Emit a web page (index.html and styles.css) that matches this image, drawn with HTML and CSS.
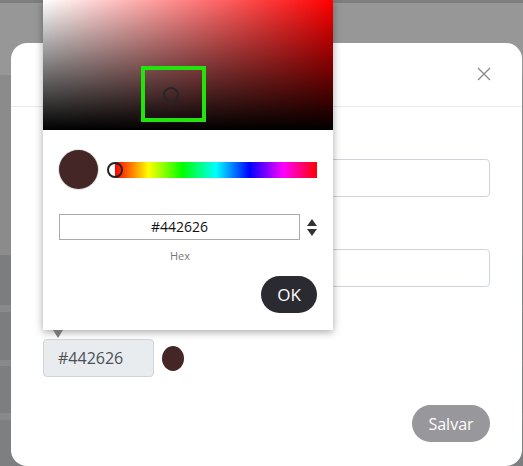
FILE: index.html
```html
<!DOCTYPE html>
<html lang="pt">
<head>
<meta charset="utf-8">
<title>Cor</title>
<link rel="stylesheet" href="styles.css">
</head>
<body>
<div class="page">
  <div class="modal">
    <div class="modal-header">
      <svg class="close" width="14" height="14" viewBox="0 0 14 14"><path d="M1 1L13 13M13 1L1 13" stroke="#8a8a8a" stroke-width="1.4" fill="none"/></svg>
    </div>
    <div class="modal-body">
      <div class="group">
        <label class="label">Nome</label>
        <div class="input"></div>
      </div>
      <div class="group">
        <label class="label">Descrição</label>
        <div class="input"></div>
      </div>
      <div class="group">
        <label class="label">Cor</label>
        <div class="color-row">
          <div class="input input-readonly">#442626</div>
          <span class="swatch"></span>
        </div>
      </div>
      <div class="footer">
        <button class="btn-save">Salvar</button>
      </div>
    </div>
  </div>

  <div class="picker">
    <div class="sat">
      <div class="sat-white"></div>
      <div class="sat-black"></div>
      <div class="sel-box"></div>
      <div class="sel-dot"></div>
    </div>
    <div class="picker-row">
      <span class="preview"></span>
      <div class="hue">
        <span class="hue-handle"></span>
      </div>
    </div>
    <div class="hex-row">
      <div class="hex-input">#442626</div>
      <svg class="spin" width="10" height="17" viewBox="0 0 10 17"><path d="M5 0L10 7H0Z" fill="#333"/><path d="M0 10H10L5 17Z" fill="#333"/></svg>
    </div>
    <div class="hex-label">Hex</div>
    <div class="ok-row">
      <button class="btn-ok">OK</button>
    </div>
    <span class="arrow"></span>
  </div>
</div>
</body>
</html>
```
FILE: styles.css
```css
* { box-sizing: border-box; }
html, body { margin: 0; padding: 0; }
body {
  width: 523px;
  height: 466px;
  overflow: hidden;
  font-family: "Open Sans", "Liberation Sans", sans-serif;
  background:
    linear-gradient(to bottom,
      #7e7e7e 0, #7e7e7e 3px,
      #979797 3px, #979797 75px,
      #8b8b8b 75px, #8b8b8b 255px,
      #7c7d7f 255px, #7c7d7f 305px,
      #898989 305px, #898989 312px,
      #7c7d7f 312px, #7c7d7f 360px,
      #898989 360px, #898989 366px,
      #7d7e80 366px, #7d7e80 413px,
      #898989 413px, #898989 420px,
      #7e7f81 420px);
}
.page {
  position: relative;
  width: 523px;
  height: 466px;
  padding: 43px 1px 0 11px;
}
.modal {
  background: #fff;
  border-radius: 16px;
  height: 423px;
  overflow: hidden;
}
.modal-header {
  height: 64px;
  border-bottom: 1px solid #e9ecef;
  display: flex;
  justify-content: flex-end;
  align-items: flex-start;
  padding: 24px 31px 0 0;
}
.close { display: block; }
.modal-body {
  padding: 16px 32px 0 32px;
}
.group { margin-bottom: 16px; }
.label {
  display: block;
  height: 24px;
  margin-bottom: 12px;
  font-size: 15px;
  color: #333;
}
.input {
  height: 38px;
  border: 1px solid #ced4da;
  border-radius: 4px;
  background: #fff;
}
.color-row {
  display: flex;
  align-items: center;
}
.input-readonly {
  width: 111px;
  background: #e9ecef;
  font-size: 16px;
  color: #495057;
  padding-left: 14px;
  line-height: 36px;
}
.swatch {
  width: 22px;
  height: 25px;
  border-radius: 50%;
  background: #442626;
  margin-left: 8px;
}
.footer {
  display: flex;
  justify-content: flex-end;
  margin-top: 28px;
}
.btn-save {
  height: 37px;
  width: 78px;
  border: none;
  border-radius: 19px;
  background: #98979c;
  color: #fff;
  font-family: inherit;
  font-size: 16px;
  padding: 0;
}

/* colour picker popover */
.picker {
  position: absolute;
  left: 43px;
  top: 0;
  width: 290px;
  height: 330px;
  background: #fff;
  box-shadow: 0 2px 8px rgba(0,0,0,0.35);
}
.sat {
  position: relative;
  height: 130px;
  background: #ff0000;
}
.sat-white, .sat-black {
  position: absolute;
  inset: 0;
}
.sat-white { background: linear-gradient(to right, #fff, rgba(255,255,255,0)); }
.sat-black { background: linear-gradient(to top, #000, rgba(0,0,0,0)); }
.sel-box {
  position: absolute;
  left: 98px;
  top: 66px;
  width: 65px;
  height: 56px;
  border: 4px solid #22e30c;
}
.sel-dot {
  position: absolute;
  left: 120px;
  top: 87px;
  width: 16px;
  height: 16px;
  border-radius: 50%;
  border: 2px solid #262626;
}
.picker-row {
  display: flex;
  align-items: center;
  padding: 20px 16px 0 16px;
}
.preview {
  width: 39px;
  height: 39px;
  border-radius: 50%;
  background: #442626;
  box-shadow: 0 0 0 1px rgba(0,0,0,0.12);
}
.hue {
  position: relative;
  margin-left: 17px;
  flex: 1;
  height: 16px;
  background: linear-gradient(to right, #f00 0%, #ff0 16.66%, #0f0 33.33%, #0ff 50%, #00f 66.66%, #f0f 83.33%, #f00 100%);
}
.hue-handle {
  position: absolute;
  left: -8px;
  top: 0;
  width: 16px;
  height: 16px;
  border-radius: 50%;
  border: 2px solid #222;
  background: linear-gradient(to right, #fff 50%, transparent 50%);
}
.hex-row {
  display: flex;
  align-items: center;
  padding: 25px 16px 0 16px;
}
.hex-input {
  width: 242px;
  height: 26px;
  border: 1px solid #aaa;
  text-align: center;
  font-size: 14px;
  line-height: 24px;
  color: #111;
}
.spin {
  display: block;
  margin-left: 7px;
}
.hex-label {
  width: 242px;
  margin-left: 16px;
  text-align: center;
  font-size: 11px;
  color: #777;
  margin-top: 8px;
  line-height: 16px;
}
.ok-row {
  display: flex;
  justify-content: flex-end;
  padding: 12px 16px 0 0;
}
.btn-ok {
  width: 56px;
  height: 37px;
  border: none;
  border-radius: 19px;
  background: #2a2b30;
  color: #fff;
  font-family: inherit;
  font-size: 17px;
  padding: 0;
}
.arrow {
  position: absolute;
  left: 10px;
  top: 330px;
  width: 0;
  height: 0;
  border-left: 5px solid transparent;
  border-right: 5px solid transparent;
  border-top: 8px solid #777;
}
```
